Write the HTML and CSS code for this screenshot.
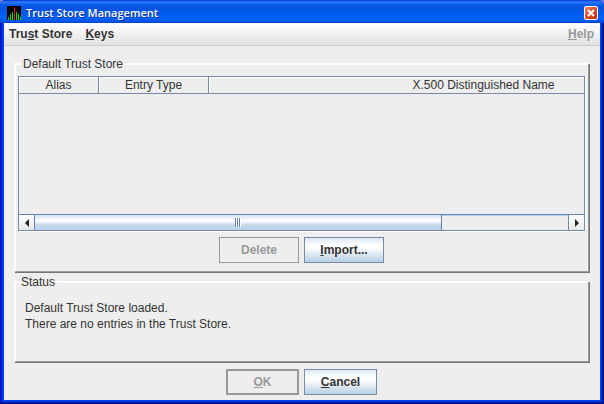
FILE: index.html
```html
<!DOCTYPE html>
<html lang="en">
<head>
  <meta charset="UTF-8">
  <meta name="viewport" content="width=device-width, initial-scale=1.0">
  <title>Trust Store Management</title>
  <link rel="stylesheet" href="styles.css">
</head>
<body>
  <div class="window">
    <header class="titlebar">
      <svg class="app-icon" width="14" height="14" viewBox="0 0 14 14" shape-rendering="crispEdges" aria-hidden="true">
        <rect width="14" height="14" fill="#000"/>
        <path d="M1 14v-3h1v3zM3 14v-6h1v6zM5 14v-8h1v8zM9 14v-8h1v8zM11 14v-6h1v6zM13 14v-3h1v3z" fill="#00e000"/>
        <path d="M7 14v-13h1v13z" fill="#ff1010"/>
      </svg>
      <h1 class="title">Trust Store Management</h1>
      <button class="close" type="button" aria-label="Close">
        <svg width="8" height="8" viewBox="0 0 8 8" aria-hidden="true">
          <path d="M1 1l6 6M7 1l-6 6" stroke="#fff" stroke-width="2"/>
        </svg>
      </button>
    </header>

    <nav class="menubar">
      <button class="menu" type="button">Tru<u>s</u>t Store</button>
      <button class="menu" type="button"><u>K</u>eys</button>
      <button class="menu menu-help" type="button" disabled><u>H</u>elp</button>
    </nav>

    <main class="content">
      <fieldset class="group store">
        <legend>Default Trust Store</legend>
        <div class="scroll-pane">
          <div class="viewport">
            <table class="entries">
              <thead>
                <tr>
                  <th class="col-alias">Alias</th>
                  <th class="col-type">Entry Type</th>
                  <th>X.500 Distinguished Name</th>
                </tr>
              </thead>
              <tbody></tbody>
            </table>
          </div>
          <div class="scrollbar">
            <button class="arrow arrow-left" type="button" aria-label="Scroll left">
              <svg width="4" height="8" viewBox="0 0 4 8" aria-hidden="true"><path d="M4 0v8l-4-4z" fill="#222"/></svg>
            </button>
            <div class="track">
              <div class="thumb"><span class="grip"></span></div>
            </div>
            <button class="arrow arrow-right" type="button" aria-label="Scroll right">
              <svg width="4" height="8" viewBox="0 0 4 8" aria-hidden="true"><path d="M0 0v8l4-4z" fill="#222"/></svg>
            </button>
          </div>
        </div>
        <div class="buttons">
          <button class="btn btn-wide" type="button" disabled>Delete</button>
          <button class="btn btn-wide" type="button"><u>I</u>mport...</button>
        </div>
      </fieldset>

      <fieldset class="group status">
        <legend>Status</legend>
        <div class="messages">
          <p>Default Trust Store loaded.</p>
          <p>There are no entries in the Trust Store.</p>
        </div>
      </fieldset>

      <div class="buttons">
        <button class="btn btn-default" type="button" disabled><u>O</u>K</button>
        <button class="btn" type="button"><u>C</u>ancel</button>
      </div>
    </main>
  </div>
</body>
</html>
```

FILE: styles.css
```css
* {
  margin: 0;
  padding: 0;
  box-sizing: border-box;
}

body {
  font-family: "Liberation Sans", Arial, sans-serif;
  font-size: 12px;
  line-height: 16px;
  color: #333;
  background: #7a7ae0;
}

button {
  font: inherit;
  color: inherit;
}

u {
  text-underline-offset: 1px;
  text-decoration-skip-ink: none;
}

.window {
  display: flex;
  flex-direction: column;
  height: 100vh;
  min-height: 300px;
  padding: 0 4px 4px;
  background: #0040e8;
  border-radius: 6px 6px 0 0;
  box-shadow: inset -2px -2px 0 #00138c, inset 2px 0 0 #0019cf;
}

/* Title bar */
.titlebar {
  display: flex;
  align-items: center;
  height: 23px;
  margin: 0 -4px;
  padding: 3px 6px 0 7px;
  background: linear-gradient(#0831d9 0, #2a7cf8 2px, #0b5ae8 5px, #0054e3 9px, #0062fb 18px, #0056ea 21px, #0040c8 23px);
  border-radius: 6px 6px 0 0;
}

.title {
  flex: 1;
  margin-left: 5px;
  font-family: "Open Sans", "Noto Sans", sans-serif;
  font-size: 11px;
  font-weight: 600;
  color: #fff;
  text-shadow: 1px 1px 0 #0a2f9a;
}

.close {
  display: flex;
  align-items: center;
  justify-content: center;
  width: 14px;
  height: 14px;
  background: linear-gradient(135deg, #f08a68, #d8431c 60%, #c03000);
  border: 1px solid #fff;
  border-radius: 2px;
}

/* Menu bar */
.menubar {
  display: flex;
  align-items: center;
  gap: 13px;
  height: 23px;
  padding: 0 6px 0 5px;
  background: linear-gradient(#fff, #e2e2e2);
  border-bottom: 1px solid #ccc;
}

.menu {
  background: none;
  border: none;
  font-weight: bold;
}

.menu:disabled {
  color: #999;
}

.menu-help {
  margin-left: auto;
}

/* Content */
.content {
  flex: 1;
  display: flex;
  flex-direction: column;
  gap: 2px;
  padding: 10px 11px 5px 10px;
  background: #eee;
}

.group {
  min-width: 0;
  border: 2px solid #fff;
  border-right: 1px solid #9c9c9c;
  border-bottom: 1px solid #9c9c9c;
  box-shadow: 1px 1px 0 #757575;
}

.group legend {
  margin-left: 3px;
  padding: 0 2px;
}

.store {
  flex: 1;
  display: flex;
  flex-direction: column;
  gap: 6px;
  padding: 4px 3px 8px 2px;
}

.scroll-pane {
  flex: 1;
  display: flex;
  flex-direction: column;
  border: 1px solid #7a8aa6;
  box-shadow: 1px 1px 0 #fff;
}

.viewport {
  flex: 1;
  overflow: hidden;
}

.entries {
  width: 740px;
  table-layout: fixed;
  border-collapse: separate;
  border-spacing: 0;
}

.entries th {
  height: 17px;
  font-weight: normal;
  border-right: 1px solid #7a8aa6;
  border-bottom: 1px solid #7a8aa6;
  box-shadow: inset 1px 1px 0 #fff;
}

.col-alias {
  width: 80px;
}

.col-type {
  width: 110px;
}

/* Scroll bar */
.scrollbar {
  display: flex;
  height: 16px;
  border-top: 1px solid #6382bf;
}

.arrow {
  display: flex;
  align-items: center;
  justify-content: center;
  width: 16px;
  background: linear-gradient(#fff, #e8e8e8);
  border: none;
}

.arrow-left {
  border-right: 1px solid #6382bf;
}

.arrow-right {
  border-left: 1px solid #7a8aa6;
}

.track {
  flex: 1;
  box-shadow: inset 0 1px 0 #b8cfe5;
}

.thumb {
  display: flex;
  align-items: center;
  justify-content: center;
  width: 76.4%;
  height: 100%;
  background: linear-gradient(#d4e2f0 0, #fff 40%, #c9daeb 65%, #b8cfe5 100%);
  border-right: 1px solid #6382bf;
}

.grip {
  width: 6px;
  height: 9px;
  background: repeating-linear-gradient(to right, #6382bf 0 1px, #fff 1px 2px);
}

/* Buttons */
.buttons {
  display: flex;
  justify-content: center;
  gap: 5px;
}

.content > .buttons {
  margin-top: 5px;
}

.btn {
  min-width: 73px;
  height: 26px;
  font-weight: bold;
  background: linear-gradient(#dde8f3 0, #fff 30%, #fff 40%, #b8cfe5 100%);
  border: 1px solid #7a8aa6;
}

.btn-wide {
  min-width: 80px;
}

.btn:disabled {
  color: #999;
  background: #eee;
  border-color: #999;
}

.btn-default {
  border-width: 2px;
}

/* Status */
.status {
  min-height: 88px;
}

.messages {
  padding: 10px 9px;
}
```
